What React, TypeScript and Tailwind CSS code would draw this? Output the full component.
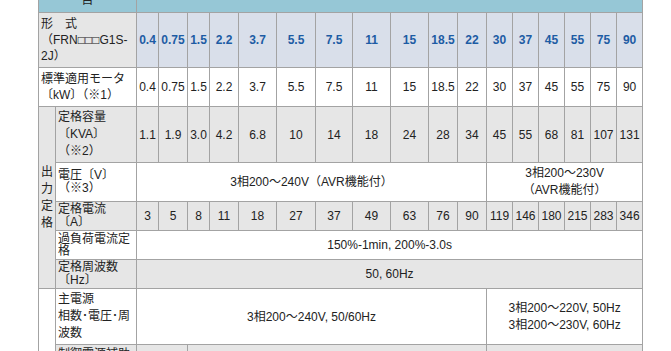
import { FC } from 'react';

const powers = ['0.4', '0.75', '1.5', '2.2', '3.7', '5.5', '7.5', '11', '15', '18.5', '22', '30', '37', '45', '55', '75', '90'];
const kva = ['1.1', '1.9', '3.0', '4.2', '6.8', '10', '14', '18', '24', '28', '34', '45', '55', '68', '81', '107', '131'];
const amps = ['3', '5', '8', '11', '18', '27', '37', '49', '63', '76', '90', '119', '146', '180', '215', '283', '346'];
const widths = [17, 81, 22, 29, 22, 29, 38, 39, 37, 38, 38, 29, 29, 26, 26, 26, 26, 26, 26];

const td = 'border border-[#a3a3a3] p-0 text-center align-middle';
const label = 'border border-[#a3a3a3] pl-[2px] pr-0 py-0 text-left align-middle';

const App: FC = () => {
  return (
    <div className="h-[351px] w-[671px] overflow-hidden bg-white text-[12px] text-[#222] font-['Liberation_Sans','Noto_Sans_CJK_JP',sans-serif]">
      <table className="ml-[38px] mt-[-29px] w-[604px] table-fixed border-collapse">
        <colgroup>
          {widths.map((w, i) => (
            <col key={i} style={{ width: w }} />
          ))}
        </colgroup>
        <tbody>
          <tr className="h-[41px] bg-[#96c7d6]">
            <td colSpan={2} className={`${td} leading-[17px]`}>
              項<br />目
            </td>
            <td colSpan={17} className="border border-[#a3a3a3]" />
          </tr>
          <tr className="h-[55px]">
            <td colSpan={2} className={`${label} bg-[#e6e6e6] leading-[16px]`}>
              形　式
              <br />
              （FRN□□□G1S-
              <br />
              2J）
            </td>
            {powers.map((p) => (
              <td key={p} className={`${td} bg-[#d9dfea] font-bold text-[#1d5ca4]`}>
                {p}
              </td>
            ))}
          </tr>
          <tr className="h-[39px] bg-white">
            <td colSpan={2} className={`${label} leading-[16px]`}>
              標準適用モータ
              <br />
              〔kW〕（※1）
            </td>
            {powers.map((p) => (
              <td key={p} className={td}>
                {p}
              </td>
            ))}
          </tr>
          <tr className="h-[56px] bg-[#e6e6e6]">
            <td rowSpan={5} className={`${td} leading-[17px]`}>
              出<br />力<br />定<br />格
            </td>
            <td className={`${label} leading-[17px]`}>
              定格容量
              <br />
              〔KVA〕
              <br />
              （※2）
            </td>
            {kva.map((k) => (
              <td key={k} className={td}>
                {k}
              </td>
            ))}
          </tr>
          <tr className="h-[39px] bg-white">
            <td className={`${label} leading-[13px]`}>
              電圧〔V〕
              <br />
              （※3）
            </td>
            <td colSpan={11} className={td}>
              3相200～240V（AVR機能付）
            </td>
            <td colSpan={6} className={`${td} leading-[17px]`}>
              3相200～230V
              <br />
              （AVR機能付）
            </td>
          </tr>
          <tr className="h-[29px] bg-[#e6e6e6]">
            <td className={`${label} leading-[13px]`}>
              定格電流
              <br />
              〔A〕
            </td>
            {amps.map((a) => (
              <td key={a} className={td}>
                {a}
              </td>
            ))}
          </tr>
          <tr className="h-[29px] bg-white">
            <td className={`${label} leading-[12px]`}>
              過負荷電流定
              <br />
              格
            </td>
            <td colSpan={17} className={td}>
              150%-1min, 200%-3.0s
            </td>
          </tr>
          <tr className="h-[29px] bg-[#e6e6e6]">
            <td className={`${label} leading-[13px]`}>
              定格周波数
              <br />
              〔Hz〕
            </td>
            <td colSpan={17} className={td}>
              50, 60Hz
            </td>
          </tr>
          <tr className="h-[56px] bg-white">
            <td rowSpan={2} className={`${td} bg-white`} />
            <td className={`${label} leading-[17px]`}>
              主電源
              <br />
              相数･電圧･周
              <br />
              波数
            </td>
            <td colSpan={11} className={td}>
              3相200～240V, 50/60Hz
            </td>
            <td colSpan={6} className={`${td} leading-[17px]`}>
              3相200～220V, 50Hz
              <br />
              3相200～230V, 60Hz
            </td>
          </tr>
          <tr className="h-[40px] bg-[#e6e6e6]">
            <td className={`${label} align-top pt-[3px] leading-[13px]`}>
              制御電源補助入
              <br />
              力
            </td>
            <td colSpan={2} className={td} />
            <td colSpan={9} className={td} />
            <td colSpan={6} className={td} />
          </tr>
        </tbody>
      </table>
    </div>
  );
};

export default App;
